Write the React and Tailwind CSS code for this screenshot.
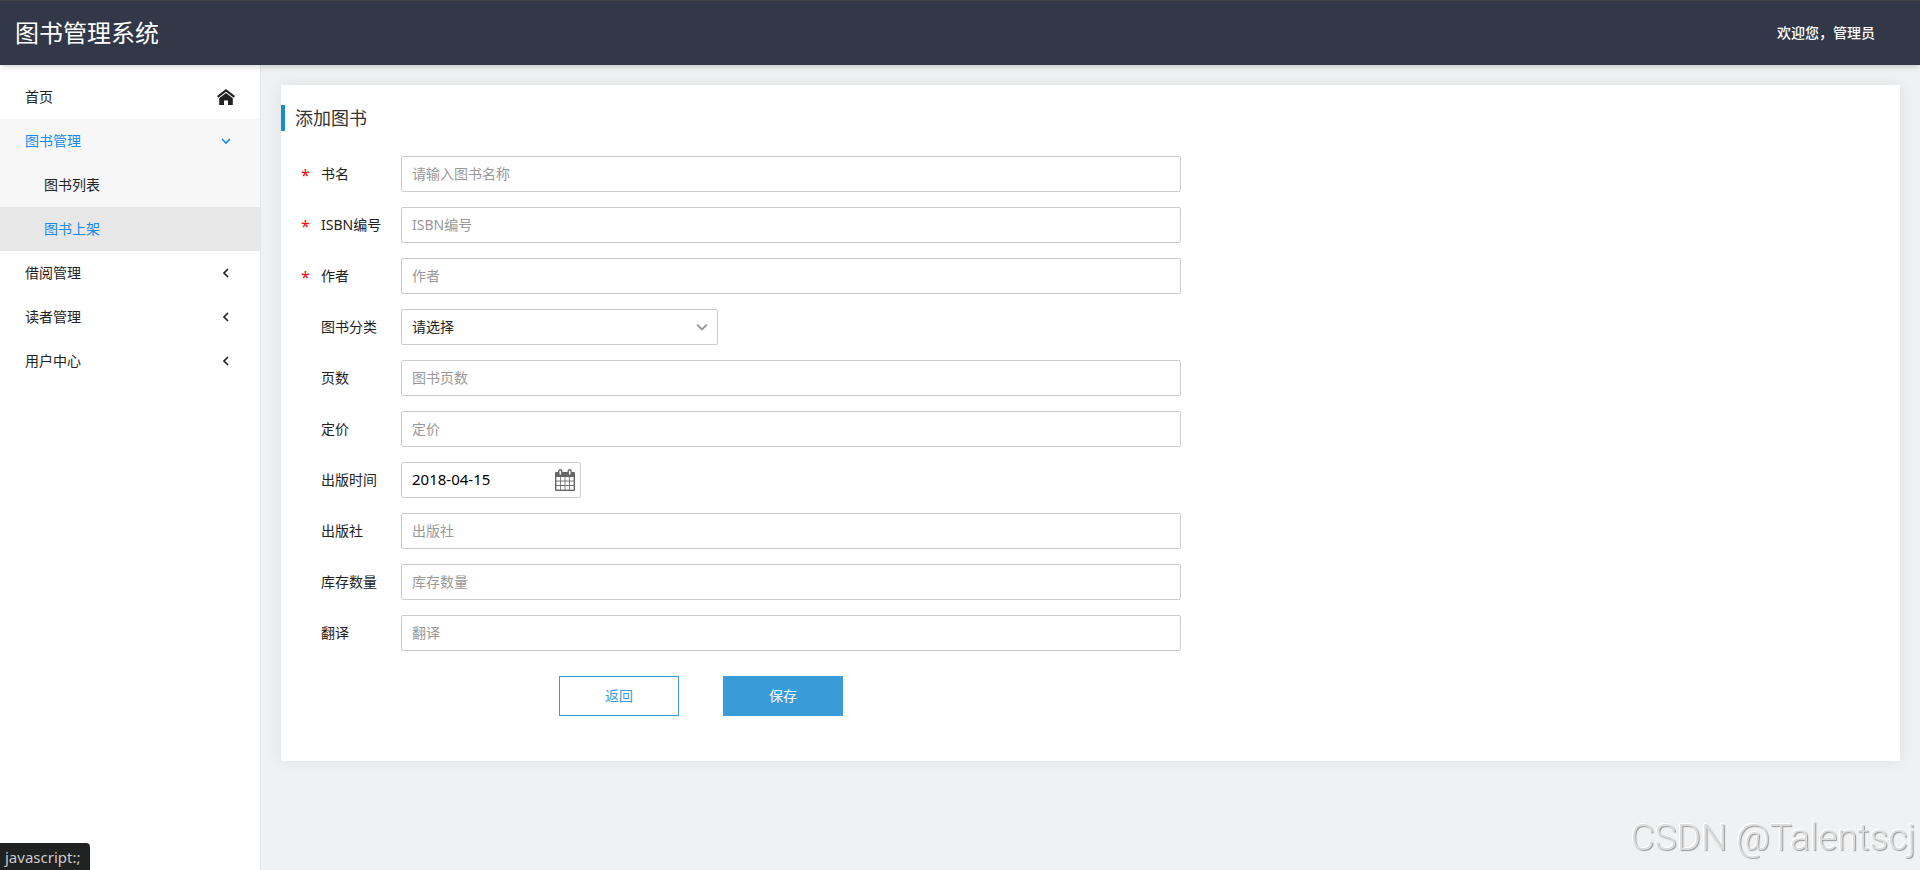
import React, { useState } from 'react';

const menu = [
    { name: '借阅管理' },
    { name: '读者管理' },
    { name: '用户中心' },
];

const HomeIcon = () => (
    <svg className="w-[18px] h-4" viewBox="0 0 18 16" fill="#222">
        <path d="M9 0L0 7L1.3 8.8L9 2.8L16.7 8.8L18 7Z" />
        <path d="M9 4L2.2 9.2V16H7V11.5H11V16H15.8V9.2Z" />
    </svg>
);

const Chevron = ({ className, d }) => (
    <svg className={className} viewBox="0 0 10 10" fill="none" stroke="currentColor" strokeWidth="1.7">
        <path d={d} />
    </svg>
);

const CalendarIcon = () => (
    <svg className="w-5 h-[22px]" viewBox="0 0 20 22">
        <rect x="0" y="3" width="20" height="19" rx="1" fill="#666" />
        <g fill="#fff">
            {[8, 12.5, 17].map((y) =>
                [1.4, 5.9, 10.4, 14.9].map((x) => <rect key={x + '-' + y} x={x} y={y} width="3.7" height="3.6" />)
            )}
        </g>
        <g fill="#fff" stroke="#666" strokeWidth="1.4">
            <rect x="3.8" y="0.7" width="3" height="5.8" rx="1.5" />
            <rect x="13.2" y="0.7" width="3" height="5.8" rx="1.5" />
        </g>
    </svg>
);

const Row = ({ id, label, required, children }) => (
    <div className="flex items-center">
        <div className="w-[120px] shrink-0 flex items-center">
            <span className="w-10 pl-5 pt-0.5 text-[#f00] text-base/5">{required && '*'}</span>
            <label htmlFor={id}>{label}</label>
        </div>
        {children}
    </div>
);

const TextRow = ({ id, label, placeholder, required }) => (
    <Row id={id} label={label} required={required}>
        <input
            id={id}
            type="text"
            placeholder={placeholder}
            className="w-full max-w-[780px] h-9 px-2.5 pb-0.5 border border-[#ccc] rounded-xs placeholder:text-[#999]"
        />
    </Row>
);

function App() {
    const [date, setDate] = useState('2018-04-15');

    return (
        <div className="min-h-screen flex flex-col bg-[#eff1f3] text-sm text-[#222] font-['Noto_Sans','Noto_Sans_CJK_SC',sans-serif]">

            {/* Header */}
            <header className="relative z-10 h-[65px] shrink-0 flex items-center justify-between pl-[15px] pr-[45px] bg-[#323848] border-t border-[#444] text-white shadow-md">
                <h1 className="text-2xl">图书管理系统</h1>
                <span className="font-medium">欢迎您，管理员</span>
            </header>

            <div className="flex grow">

                {/* Sidebar */}
                <nav className="w-[261px] shrink-0 pt-2.5 bg-white border-r border-[#e4e5e8]">
                    <a href="#" className="h-11 pl-[25px] pr-[25px] flex items-center justify-between">
                        首页
                        <HomeIcon />
                    </a>
                    <div className="bg-[#f7f7f7]">
                        <a href="#" className="h-11 pl-[25px] pr-[29px] flex items-center justify-between text-[#1589ee]">
                            图书管理
                            <Chevron className="size-2.5" d="M1 3L5 7L9 3" />
                        </a>
                        <a href="#" className="h-11 pl-11 flex items-center">图书列表</a>
                        <a href="#" className="h-11 pl-11 flex items-center bg-[#e7e7e7] text-[#1589ee]">图书上架</a>
                    </div>
                    {menu.map((item) => (
                        <a key={item.name} href="#" className="h-11 pl-[25px] pr-[29px] flex items-center justify-between">
                            {item.name}
                            <Chevron className="size-2.5" d="M7 1L3 5L7 9" />
                        </a>
                    ))}
                </nav>

                {/* Add book form */}
                <main className="grow p-5">
                    <form className="pt-5 pb-[45px] bg-white shadow-[0_0_15px_rgba(0,0,0,0.08)]" onSubmit={(e) => e.preventDefault()}>
                        <h2 className="mb-[25px] pl-2.5 border-l-4 border-[#1790c1] text-lg/[26px] text-[#333]">添加图书</h2>

                        <div className="flex flex-col gap-[15px]">
                            <TextRow id="name" label="书名" placeholder="请输入图书名称" required />
                            <TextRow id="isbn" label="ISBN编号" placeholder="ISBN编号" required />
                            <TextRow id="author" label="作者" placeholder="作者" required />
                            <Row id="category" label="图书分类">
                                <div className="relative w-[317px]">
                                    <select id="category" className="appearance-none w-full h-9 px-2.5 border border-[#ccc] rounded-xs bg-white">
                                        <option>请选择</option>
                                    </select>
                                    <Chevron className="absolute right-2.5 top-3 size-3 text-[#999] pointer-events-none" d="M1 3L5 7L9 3" />
                                </div>
                            </Row>
                            <TextRow id="pages" label="页数" placeholder="图书页数" />
                            <TextRow id="price" label="定价" placeholder="定价" />
                            <Row id="date" label="出版时间">
                                <div className="w-[180px] h-9 pl-2.5 pr-[5px] flex items-center border border-[#ccc] rounded-xs">
                                    <input
                                        id="date"
                                        type="text"
                                        value={date}
                                        onChange={(e) => setDate(e.target.value)}
                                        className="w-full min-w-0 text-[15px] text-black"
                                    />
                                    <button type="button" aria-label="选择日期" className="shrink-0">
                                        <CalendarIcon />
                                    </button>
                                </div>
                            </Row>
                            <TextRow id="press" label="出版社" placeholder="出版社" />
                            <TextRow id="stock" label="库存数量" placeholder="库存数量" />
                            <TextRow id="translator" label="翻译" placeholder="翻译" />
                        </div>

                        <div className="mt-[25px] pl-[278px] flex gap-11">
                            <button type="button" className="w-[120px] h-10 border border-[#3a9bd9] text-[#3a9bd9]">返回</button>
                            <button type="submit" className="w-[120px] h-10 bg-[#3a9bd9] text-white">保存</button>
                        </div>
                    </form>
                </main>
            </div>

            {/* Link status bubble */}
            <div className="fixed left-0 bottom-0 h-[27px] pl-[5px] pr-2.5 pt-0.5 flex items-center bg-[#202222] rounded-tr-sm text-[#ccc] text-[15px]">
                javascript:;
            </div>

            {/* Watermark */}
            <div className="fixed right-1 bottom-3 text-[37px]/10 font-light text-[#dcdcdc] font-['Roboto','Inter',sans-serif] [text-shadow:1px_1px_1px_#999,-1px_-1px_0_#fff]">
                CSDN @Talentscj
            </div>
        </div>
    );
}

export default App;
